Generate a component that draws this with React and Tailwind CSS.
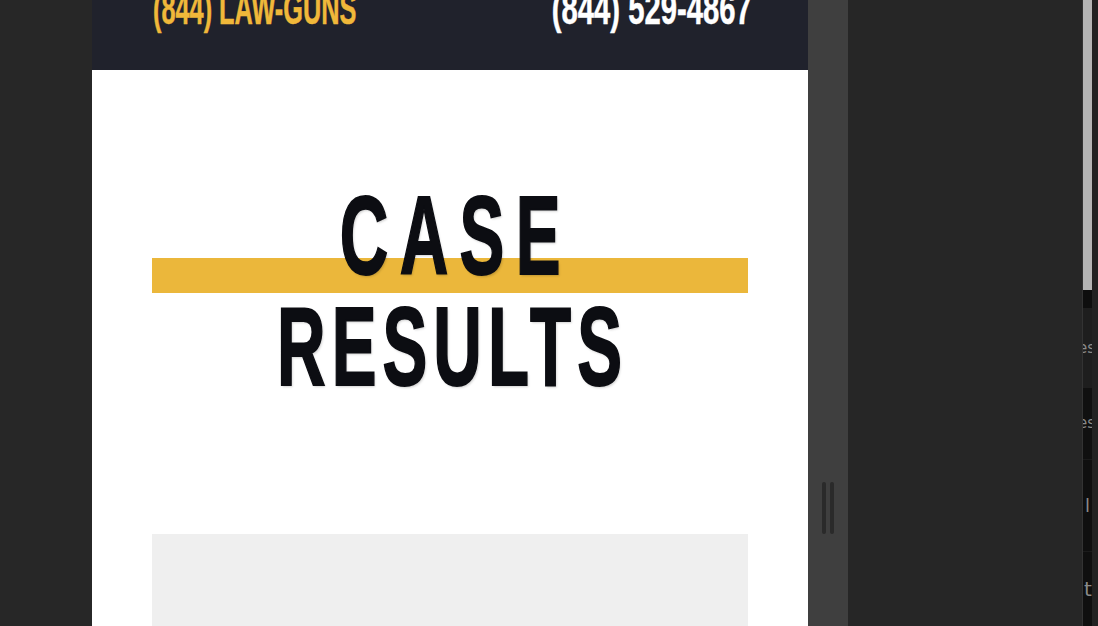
import React from 'react';

const condensed = { fontFamily: '"Liberation Sans", Arial, sans-serif' };

function Header() {
  return (
    <div className="h-[70px] shrink-0 bg-[#20222c] flex justify-between items-start pl-[61px] pr-[56px] overflow-hidden">
      <a className="w-[206px] flex justify-start">
        <span
          style={condensed}
          className="inline-block mt-[-13px] text-[44px] leading-none font-bold text-[#f0b83a] origin-left scale-x-[0.575] whitespace-nowrap [-webkit-text-stroke:0.5px_#f0b83a]"
        >
          (844) LAW-GUNS
        </span>
      </a>
      <a className="w-[200px] flex justify-end">
        <span
          style={condensed}
          className="inline-block mt-[-13px] text-[44px] leading-none font-bold text-white origin-right scale-x-[0.665] whitespace-nowrap [-webkit-text-stroke:0.5px_#fff]"
        >
          (844) 529-4867
        </span>
      </a>
    </div>
  );
}

function Hero() {
  return (
    <div className="px-[60px] pt-[110px]">
      <div className="relative">
        {/* yellow stripe behind the title */}
        <div className="absolute left-0 right-0 top-[78px] h-[35px] bg-[#ebb73b]" />
        <h1
          style={condensed}
          className="relative font-bold text-[112px] leading-[111px] text-[#0c0d12] [-webkit-text-stroke:2px_#0c0d12] [text-shadow:2px_2px_3px_rgba(0,0,0,0.18)]"
        >
          <div className="flex justify-center">
            <span className="inline-block shrink-0 whitespace-nowrap scale-x-[0.6] tracking-[0.17em] pl-[0.17em]">CASE</span>
          </div>
          <div className="flex justify-center">
            <span className="inline-block shrink-0 whitespace-nowrap scale-x-[0.6] tracking-[0.09em] pl-[0.09em]">RESULTS</span>
          </div>
        </h1>
      </div>
      <div className="mt-[132px] h-[120px] bg-[#efefef]" />
    </div>
  );
}

function Scrollbar() {
  return (
    <div className="w-[10px] shrink-0 flex flex-col border-l border-[#333] text-[#8a8a8a] text-[15px] leading-none" style={{ fontFamily: '"DejaVu Sans", sans-serif' }}>
      <div className="h-[290px] shrink-0 bg-[#b4b4b4]" />
      <div className="h-[18px] shrink-0 bg-[#0e0e0e]" />
      <div className="h-[80px] shrink-0 bg-[#1e1e1e] flex items-center overflow-hidden">
        <span className="-ml-[5px]">es</span>
      </div>
      <div className="h-[72px] shrink-0 bg-[#101010] flex items-center overflow-hidden border-b border-[#1b1b1b]">
        <span className="-ml-[5px]">es</span>
      </div>
      <div className="h-[92px] shrink-0 bg-[#0f0f0f] flex items-center overflow-hidden border-b border-[#1b1b1b]">
        <span className="ml-[2px] text-[18px]">l</span>
      </div>
      <div className="flex-1 bg-[#0f0f0f] flex items-center overflow-hidden">
        <span className="ml-[1px] text-[20px]">t</span>
      </div>
    </div>
  );
}

export default function App() {
  return (
    <div className="w-[1098px] h-[626px] overflow-hidden flex bg-[#272727]">
      <div className="w-[92px] shrink-0" />
      <div className="w-[716px] shrink-0 bg-white flex flex-col overflow-hidden">
        <Header />
        <Hero />
      </div>
      <div className="w-[40px] shrink-0 bg-[#3f3f3f] flex justify-start gap-[4px] pl-[14px] pt-[482px]">
        <div className="w-[4px] h-[52px] rounded-full bg-[#2a2a2a]" />
        <div className="w-[4px] h-[52px] rounded-full bg-[#2a2a2a]" />
      </div>
      <div className="w-[234px] shrink-0 bg-[#262626]" />
      <Scrollbar />
      <div className="flex-1 bg-[#222]" />
    </div>
  );
}
